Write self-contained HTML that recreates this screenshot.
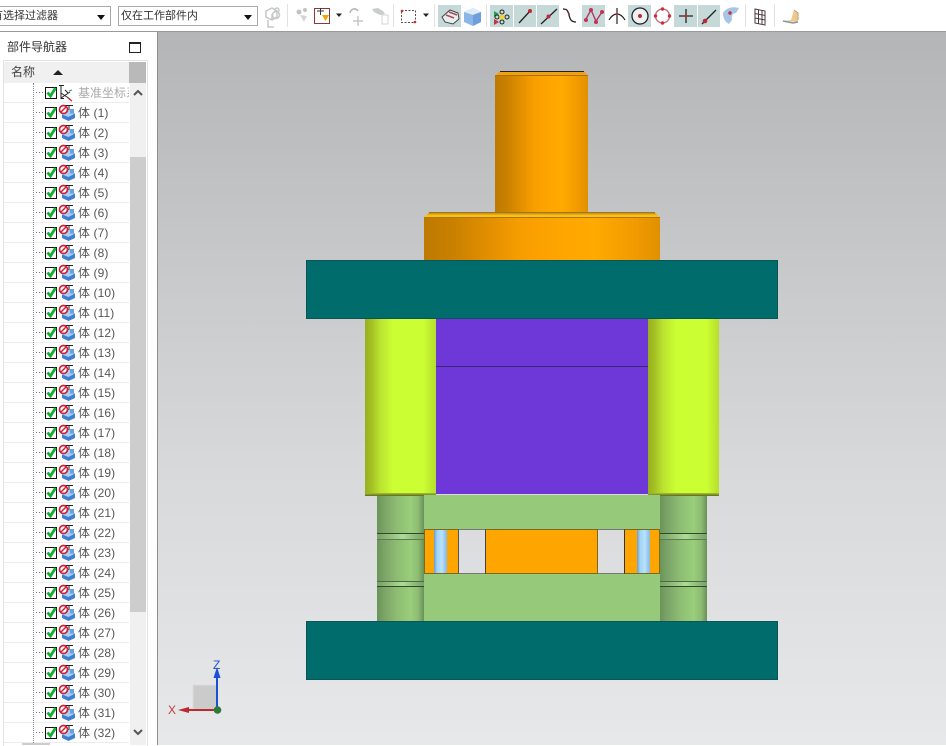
<!DOCTYPE html>
<html><head><meta charset="utf-8">
<style>
html,body{margin:0;padding:0;width:946px;height:745px;overflow:hidden;background:#fff;font-family:"Liberation Sans","Noto Sans CJK SC",sans-serif;font-size:12px;color:#444}
.a{position:absolute}
.combo{position:absolute;top:6px;height:18px;border:1px solid #a9a9a9;background:#fff;line-height:18px;overflow:hidden;white-space:nowrap;font-size:11px}
.combo i{position:absolute;right:5px;top:8px;border:4px solid transparent;border-top:5px solid #111;border-bottom:0}
#tree{position:absolute;left:4px;top:83px;width:125px;height:662px;overflow:hidden;background:#fff}
.r{position:relative;height:19px;border-bottom:1px solid #ececec;line-height:19px;white-space:nowrap}
.r span{position:absolute;left:74px;top:1px;color:#555;letter-spacing:.1px}
.r svg{position:absolute;left:29px;top:-1px;width:44px;height:20px}
.cyl1{background:linear-gradient(90deg,#bd7a00 0,#c98000 12%,#e08e00 26%,#f89e00 42%,#ffa600 60%,#ffaa00 72%,#f09a00 90%,#e09000 100%)}
.cyl2{background:linear-gradient(90deg,#98ae20 0,#a4c024 9%,#bce430 22%,#ccff33 40%,#ccff33 82%,#b5de2c 100%)}
.cyl3{background:linear-gradient(90deg,#6a9459 0,#7aa266 14%,#8cbb72 40%,#99ce7b 72%,#8cbb72 88%,#68905b 100%)}
.blue{background:linear-gradient(90deg,#6c9ed4 0,#a3d3f7 25%,#b8e2fb 60%,#86b8e6 100%)}
</style></head><body>

<!-- toolbar -->
<div class="a" style="left:0;top:0;width:946px;height:31px;background:#fff"></div>
<div class="a" style="left:0;top:31px;width:946px;height:1px;background:#9a9a9a"></div>
<div class="combo" style="left:-5px;width:114px"><div class="a" style="left:-15px;top:0;color:#333">没有选择过滤器</div><i></i></div>
<div class="combo" style="left:118px;padding-left:2px;width:136px;color:#333">仅在工作部件内<i></i></div>

<svg class="a" style="left:0;top:0" width="946" height="31" viewBox="0 0 946 31">
<g fill="#c5d9d9">
<rect x="438" y="5" width="23" height="22"/><rect x="490" y="5" width="23" height="22"/><rect x="514" y="5" width="22" height="22"/><rect x="537" y="5" width="22" height="22"/><rect x="582" y="5" width="23" height="22"/><rect x="628" y="5" width="23" height="22"/><rect x="674" y="5" width="23" height="22"/><rect x="698" y="5" width="22" height="22"/>
</g>
<g stroke="#e2e2e2"><path d="M287.500 4V27M393.500 4V27M434.500 4V27M486.500 4V27M745.500 4V27M774.500 4V27"/></g>
<!-- faded icons -->
<g fill="none" stroke="#c4c8c8" stroke-width="1.500">
<path d="M266 11l6-3 5 3v6l-5 3-6-3zM272 14v6M268 20v7h6"/><circle cx="276" cy="15" r="3.500"/><circle cx="277" cy="10" r="2"/>
</g>
<circle cx="299" cy="12" r="2.500" fill="#bfc4c4"/><circle cx="305" cy="10" r="2" fill="#bfc4c4"/><path d="M300 15l7 1-3 6z" fill="#d3d6d6"/>
<rect x="314.500" y="8.500" width="15" height="15" fill="#fff" stroke="#8a3838"/><path d="M317 11h7M320.500 8v7" stroke="#333"/><path d="M322 15h7l-3.500 6z" fill="#f0a800"/>
<path d="M336 13.500h6l-3 3.500z" fill="#222"/>
<path d="M350 13c1-5 6-5 8-2" fill="none" stroke="#b4b4b4" stroke-width="1.500"/><path d="M358 16v10M353 21h10" stroke="#c4c8c8" stroke-width="1.500"/>
<path d="M372 9l6-1 5 3 2 3-5 1-6-3z" fill="#c9cccc"/><rect x="382" y="15" width="6" height="9" fill="none" stroke="#d4d6d6"/>
<!-- rect select -->
<rect x="401.500" y="10.500" width="14" height="12" fill="none" stroke="#5c4a4a" stroke-dasharray="2 1.500"/><circle cx="402" cy="11" r="1.300" fill="#c03030"/><circle cx="415" cy="22" r="1.300" fill="#c03030"/>
<path d="M423 13.500h6l-3 3.500z" fill="#222"/>
<!-- solid icons -->
<path d="M442 17l8-7 8 3 1 6-6 5-8-2z" fill="#e8eeee" stroke="#444"/><path d="M446 15l8 3M449 12l8 3" stroke="#b04a5a" stroke-width="1.500"/>
<path d="M464 12l9-4 8 4v10l-8 4-9-4z" fill="#8cb6e8"/><path d="M464 12l9-4 8 4-8 3z" fill="#dcecfa"/><path d="M473 15v11l8-4V12z" fill="#6f9edc"/>
<!-- snap point -->
<path d="M494 11l5 3-5 3z" fill="#20a050"/><path d="M494 19l5 3-5 3z" fill="#c83040"/>
<circle cx="502" cy="12" r="2" fill="none" stroke="#222"/><circle cx="502" cy="22" r="2" fill="none" stroke="#222"/><circle cx="497" cy="17" r="2" fill="none" stroke="#222"/><circle cx="507" cy="17" r="2" fill="none" stroke="#222"/><path d="M502 14l3 3-3 3-3-3z" fill="#f2d820"/>
<path d="M519 23L531 10" stroke="#222" stroke-width="1.300"/><circle cx="530" cy="11" r="2" fill="#c02838"/>
<path d="M541 24L557 9" stroke="#222" stroke-width="1.300"/><circle cx="548.500" cy="16.500" r="2" fill="#c02838"/>
<path d="M563 9c5 0 5 3 6 6s1 7 7 7" fill="none" stroke="#222" stroke-width="1.300"/><circle cx="569" cy="14" r="1" fill="#c02838"/>
<path d="M586 19l5-9 5 11 6-9" fill="none" stroke="#b03060" stroke-width="1.300"/><circle cx="586" cy="20" r="2" fill="#c83050"/><circle cx="591" cy="10" r="2" fill="#c83050"/><circle cx="596" cy="22" r="2" fill="#c83050"/><circle cx="602" cy="12" r="2" fill="#c83050"/>
<path d="M609 20c3-5 6-6 8-6s5 1 8 6M617 8v16" fill="none" stroke="#222" stroke-width="1.200"/><circle cx="617" cy="14" r="1.200" fill="#c02838"/>
<circle cx="640" cy="16" r="8" fill="#eef2f2" stroke="#222" stroke-width="1.300"/><circle cx="640" cy="16" r="2" fill="#c02838"/>
<circle cx="662.500" cy="16" r="7" fill="none" stroke="#c86070" stroke-width="1.300"/><g fill="#c83040"><circle cx="662.500" cy="9" r="1.700"/><circle cx="662.500" cy="23" r="1.700"/><circle cx="655.500" cy="16" r="1.700"/><circle cx="669.500" cy="16" r="1.700"/></g>
<path d="M679 16h14M686 9v14" stroke="#222" stroke-width="1.300"/><circle cx="686" cy="16" r="1.500" fill="#c02838"/>
<path d="M702 24L716 10" stroke="#222" stroke-width="1.300"/><circle cx="705" cy="21" r="2.300" fill="#c02838"/>
<path d="M723 13c3-5 9-7 16-5l-3 5c-3 0-5 2-4 7l-3 4c-4-2-6-6-6-11z" fill="#a8c4e6"/><circle cx="730" cy="13" r="1.700" fill="#c03040"/>
<!-- grid -->
<path d="M755 9l10 2v14l-10-2zM758.500 10v14M762 10.500v14M755 13.500l10 2M755 18l10 2" fill="none" stroke="#4a3a40"/>
<!-- bottom icon -->
<path d="M783 21l8-1 3-10 4 3v9z" fill="#eec98c"/><path d="M783 21l10 2 5-1" fill="none" stroke="#8a94a4" stroke-width="1.500"/><path d="M794 10l4 3v7" fill="none" stroke="#c0a070"/>
</svg>

<!-- left panel -->
<div class="a" style="left:0;top:32px;width:157px;height:713px;background:#fff"></div>
<div class="a" style="left:157px;top:32px;width:1px;height:713px;background:#8e8e8e"></div>
<div class="a" style="left:7px;top:39px;font-size:12px;line-height:16px;color:#333">部件导航器</div>
<div class="a" style="left:129px;top:42px;width:10px;height:8px;border:1px solid #222;border-top:2px solid #222;background:#fff"></div>
<div class="a" style="left:3px;top:60px;width:143px;height:685px;border:1px solid #e2e2e2;border-bottom:0"></div>
<div class="a" style="left:4px;top:62px;width:125px;height:21px;background:#f0f0f0"></div>
<div class="a" style="left:129px;top:62px;width:17px;height:21px;background:#b9b9b9"></div>
<div class="a" style="left:11px;top:64px;line-height:16px;color:#444">名称</div>
<div class="a" style="left:53px;top:70px;border:5px solid transparent;border-top:0;border-bottom:5px solid #222"></div>

<div id="tree">
<svg width="0" height="0" style="position:absolute"><defs>
<symbol id="ic" viewBox="0 0 44 20">
<path d="M0 10.500h12" stroke="#777" stroke-dasharray="1 2"/>
<rect x="12.500" y="5.500" width="11" height="11" fill="#fff" stroke="#111"/>
<path d="M14.500 10.500l3 3.500 5-8" fill="none" stroke="#10b030" stroke-width="2.800"/>
<path d="M32 3.500h8M36 3.500v8" stroke="#222"/>
<path d="M29 12.500l7-4.500 6 3.500v4.500l-6.500 3-6.500-3z" fill="#3f7fd2"/><path d="M29 12.500l7-4.500 6 3.500-6.500 3.500z" fill="#a8cef2"/><path d="M37 7h4v4.500h-4z" fill="#6a9fe0"/>
<circle cx="30.500" cy="7.500" r="4" fill="#fff" stroke="#d02038" stroke-width="1.700"/><path d="M27.500 10.500l6-6" stroke="#d02038" stroke-width="1.500"/>
</symbol>
<symbol id="ic0" viewBox="0 0 44 20">
<path d="M0 10.500h12" stroke="#777" stroke-dasharray="1 2"/>
<rect x="12.500" y="5.500" width="11" height="11" fill="#fff" stroke="#111"/>
<path d="M14.500 10.500l3 3.500 5-8" fill="none" stroke="#10b030" stroke-width="2.800"/>
<path d="M26 3.500h5M28 3.500v13h3M28 16l9-6M28 11l9 6M32 8l3 3" fill="none" stroke="#222"/><path d="M35 16l4 3" stroke="#d02038" stroke-width="1.300"/><path d="M36 9l3-1" stroke="#20a050"/>
</symbol>
</defs></svg>
<div class="r"><svg><use href="#ic0"/></svg><span style="color:#aaa;letter-spacing:0">基准坐标系</span></div>
<div class="r"><svg><use href="#ic"/></svg><span>体 (1)</span></div>
<div class="r"><svg><use href="#ic"/></svg><span>体 (2)</span></div>
<div class="r"><svg><use href="#ic"/></svg><span>体 (3)</span></div>
<div class="r"><svg><use href="#ic"/></svg><span>体 (4)</span></div>
<div class="r"><svg><use href="#ic"/></svg><span>体 (5)</span></div>
<div class="r"><svg><use href="#ic"/></svg><span>体 (6)</span></div>
<div class="r"><svg><use href="#ic"/></svg><span>体 (7)</span></div>
<div class="r"><svg><use href="#ic"/></svg><span>体 (8)</span></div>
<div class="r"><svg><use href="#ic"/></svg><span>体 (9)</span></div>
<div class="r"><svg><use href="#ic"/></svg><span>体 (10)</span></div>
<div class="r"><svg><use href="#ic"/></svg><span>体 (11)</span></div>
<div class="r"><svg><use href="#ic"/></svg><span>体 (12)</span></div>
<div class="r"><svg><use href="#ic"/></svg><span>体 (13)</span></div>
<div class="r"><svg><use href="#ic"/></svg><span>体 (14)</span></div>
<div class="r"><svg><use href="#ic"/></svg><span>体 (15)</span></div>
<div class="r"><svg><use href="#ic"/></svg><span>体 (16)</span></div>
<div class="r"><svg><use href="#ic"/></svg><span>体 (17)</span></div>
<div class="r"><svg><use href="#ic"/></svg><span>体 (18)</span></div>
<div class="r"><svg><use href="#ic"/></svg><span>体 (19)</span></div>
<div class="r"><svg><use href="#ic"/></svg><span>体 (20)</span></div>
<div class="r"><svg><use href="#ic"/></svg><span>体 (21)</span></div>
<div class="r"><svg><use href="#ic"/></svg><span>体 (22)</span></div>
<div class="r"><svg><use href="#ic"/></svg><span>体 (23)</span></div>
<div class="r"><svg><use href="#ic"/></svg><span>体 (24)</span></div>
<div class="r"><svg><use href="#ic"/></svg><span>体 (25)</span></div>
<div class="r"><svg><use href="#ic"/></svg><span>体 (26)</span></div>
<div class="r"><svg><use href="#ic"/></svg><span>体 (27)</span></div>
<div class="r"><svg><use href="#ic"/></svg><span>体 (28)</span></div>
<div class="r"><svg><use href="#ic"/></svg><span>体 (29)</span></div>
<div class="r"><svg><use href="#ic"/></svg><span>体 (30)</span></div>
<div class="r"><svg><use href="#ic"/></svg><span>体 (31)</span></div>
<div class="r"><svg><use href="#ic"/></svg><span>体 (32)</span></div>
<div class="a" style="left:29px;top:0;height:662px;border-left:1px dotted #888"></div>
</div>

<!-- scrollbar -->
<div class="a" style="left:130px;top:83px;width:16px;height:662px;background:#f0f0f0"></div>
<div class="a" style="left:130px;top:157px;width:16px;height:455px;background:#cdcdcd"></div>
<svg class="a" style="left:130px;top:83px" width="16" height="662"><path d="M4 12l4-4 4 4M4 647l4 4 4-4" fill="none" stroke="#555" stroke-width="2"/></svg>
<div class="a" style="left:22px;top:743px;width:28px;height:2px;background:#cdcdcd"></div>

<!-- viewport -->
<div class="a" style="left:158px;top:32px;width:788px;height:713px;background:linear-gradient(180deg,#b4b5b7 0,#c6c7c9 30%,#d8d9db 62%,#e7e8ea 100%)"></div>

<!-- top pin -->
<div class="a cyl1" style="left:495px;top:75px;width:93px;height:138px"></div>
<svg class="a" style="left:495px;top:71px" width="93" height="5"><path d="M0 5L5 0H89L93 5z" fill="#f0a010"/><path d="M5 .5H89" stroke="#222"/><path d="M0 4.500H93" stroke="#a87410"/></svg>
<!-- flange -->
<div class="a cyl1" style="left:424px;top:217px;width:236px;height:43px"></div>
<svg class="a" style="left:424px;top:212px" width="236" height="6"><defs><linearGradient id="fg" x1="0" y1="0" x2="0" y2="1"><stop offset="0" stop-color="#c08a18"/><stop offset=".6" stop-color="#ffc010"/></linearGradient></defs><path d="M0 5L5 1H231L236 5z" fill="url(#fg)"/><path d="M5 .5H231" stroke="#9c7a20"/><path d="M0 5.500H236" stroke="#a87a10"/></svg>
<!-- top plate -->
<div class="a" style="left:306px;top:260px;width:472px;height:59px;background:#006c6c;box-shadow:inset 0 0 0 1px #0b5556"></div>
<!-- purple -->
<div class="a" style="left:436px;top:319px;width:212px;height:175px;background:#6e38d8"></div>
<div class="a" style="left:436px;top:366px;width:212px;height:1px;background:#3a2570"></div>
<!-- pillars -->
<div class="a cyl2" style="left:365px;top:319px;width:71px;height:174px"></div>
<div class="a cyl2" style="left:648px;top:319px;width:71px;height:174px"></div>
<div class="a" style="left:365px;top:493px;width:71px;height:3px;background:linear-gradient(180deg,#a6c030,#5c6a20)"></div>
<div class="a" style="left:648px;top:493px;width:71px;height:3px;background:linear-gradient(180deg,#a6c030,#5c6a20)"></div>
<!-- green cols -->
<div class="a cyl3" style="left:377px;top:496px;width:47px;height:125px"></div>
<div class="a cyl3" style="left:660px;top:496px;width:47px;height:125px"></div>
<svg class="a" style="left:377px;top:530px" width="330" height="60">
<defs><linearGradient id="gg"><stop offset="0" stop-color="#76a064"/><stop offset=".55" stop-color="#aedc96"/><stop offset="1" stop-color="#76a064"/></linearGradient></defs>
<g id="g1"><path d="M0 3.500H47" stroke="#2f4a2c"/><rect x="0" y="4" width="47" height="5" fill="url(#gg)"/><path d="M0 9.500H47" stroke="#5c7c50"/><path d="M0 51.500H47" stroke="#4d6b46"/><rect x="0" y="52" width="47" height="4" fill="url(#gg)"/><path d="M0 56.500H47" stroke="#2f4a2c"/></g>
<g transform="translate(283 0)"><path d="M0 3.500H47" stroke="#2f4a2c"/><rect x="0" y="4" width="47" height="5" fill="url(#gg)"/><path d="M0 9.500H47" stroke="#5c7c50"/><path d="M0 51.500H47" stroke="#4d6b46"/><rect x="0" y="52" width="47" height="4" fill="url(#gg)"/><path d="M0 56.500H47" stroke="#2f4a2c"/></g>
</svg>
<!-- green plates -->
<div class="a" style="left:424px;top:495px;width:236px;height:34px;background:#97c97a"></div>
<div class="a" style="left:424px;top:574px;width:236px;height:47px;background:#97c97a"></div>
<!-- middle -->
<div class="a" style="left:424px;top:529px;width:35px;height:45px;background:#ffa500;box-sizing:border-box;border:1px solid #7a6a20;border-right-color:#555"></div>
<div class="a blue" style="left:434px;top:530px;width:13px;height:43px"></div>
<div class="a" style="left:485px;top:529px;width:113px;height:45px;background:#ffa500;box-sizing:border-box;border:1px solid #7a6a20;border-left-color:#444"></div>
<div class="a" style="left:624px;top:529px;width:36px;height:45px;background:#ffa500;box-sizing:border-box;border:1px solid #7a6a20;border-left-color:#333"></div>
<div class="a blue" style="left:637px;top:530px;width:13px;height:43px"></div>
<div class="a" style="left:459px;top:529px;width:26px;height:1px;background:#777"></div>
<div class="a" style="left:459px;top:573px;width:26px;height:1px;background:#777"></div>
<div class="a" style="left:598px;top:529px;width:26px;height:1px;background:#777"></div>
<div class="a" style="left:598px;top:573px;width:26px;height:1px;background:#777"></div>
<!-- bottom plate -->
<div class="a" style="left:306px;top:621px;width:472px;height:59px;background:#006c6c;box-shadow:inset 0 0 0 1px #0b5556"></div>

<!-- triad -->
<svg class="a" style="left:160px;top:655px" width="70" height="65">
<rect x="33" y="30" width="24" height="25" fill="#cbcbcb" stroke="#dcdcdc"/>
<path d="M57 55V18" stroke="#1a50d8" stroke-width="2"/><path d="M57 12l-3.500 11h7z" fill="#1a50d8"/>
<path d="M57 55H24" stroke="#c02830" stroke-width="2"/><path d="M18 55l11-3v6z" fill="#c02830"/>
<circle cx="57.500" cy="55" r="3.800" fill="#2c7a3c"/>
<text x="53" y="14" font-family="Liberation Sans" font-size="12" fill="#2050d0">Z</text>
<text x="8" y="59" font-family="Liberation Sans" font-size="12" fill="#c03838">X</text>
</svg>
</body></html>
